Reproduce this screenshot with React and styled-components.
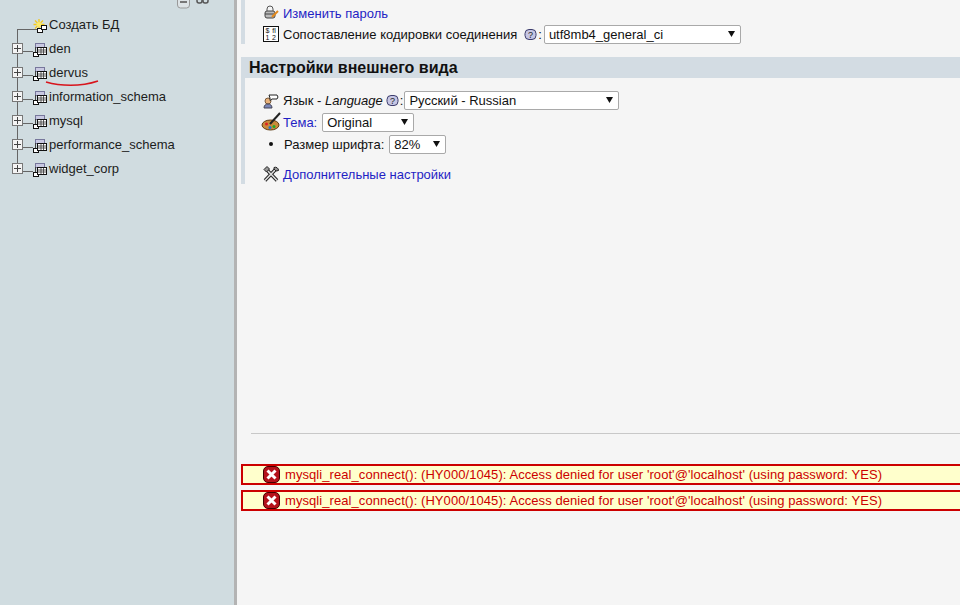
import React from "react";
import styled, { createGlobalStyle } from "styled-components";

const Global = createGlobalStyle`
  html, body { margin: 0; padding: 0; height: 605px; overflow: hidden; background: #f5f5f5; }
  body { font-family: "Liberation Sans", Arial, sans-serif; font-size: 13px; color: #111; }
`;

const Page = styled.div`display: flex; width: 960px; height: 605px; overflow: hidden;`;
const Sidebar = styled.aside`
  flex: 0 0 234px; background: #d0dce0; display: flex; flex-direction: column; position: relative;
`;
const SideTools = styled.div`
  display: flex; gap: 6px; height: 9px; padding-left: 177px; align-items: flex-start; overflow: hidden;
`;
const Tree = styled.ul`list-style: none; margin: 3px 0 0; padding: 0 0 0 12px;`;
const TreeRow = styled.li`
  display: flex; align-items: center; height: 24px; position: relative; font-size: 13px; color: #1c1c1c;
  &::before {
    content: ""; position: absolute; left: 5px; top: ${p => p.$first ? "17px" : "0"}; bottom: ${p => p.$last ? "7px" : "0"}; width: 1px; background: #666;
  }
`;
const Expander = styled.span`
  box-sizing: border-box; display: block; flex: 0 0 11px; height: 11px; border: 1px solid #777; background: #f4f4f4; position: relative; z-index: 1; visibility: ${p => p.$hide ? "hidden" : "visible"};
  &::before { content: ""; position: absolute; left: 1px; right: 1px; top: 4px; height: 1px; background: #444; }
  &::after { content: ""; position: absolute; top: 1px; bottom: 1px; left: 4px; width: 1px; background: #444; }
`;
const Connector = styled.span`
  flex: 0 0 ${p => p.$long ? 20 : 10}px; height: 1px; background: #666; margin: ${p => p.$long ? "10px -4px 0 -6px" : "7px 0 0"};
`;
const TreeIcon = styled.svg`flex: 0 0 14px; width: 14px; height: 14px; margin-right: 2px; margin-top: 3px; position: relative;`;
const Mark = styled.svg`position: absolute; left: 45px; top: 79px; width: 54px; height: 9px;`;
const Divider = styled.div`flex: 0 0 3px; background: #b3b3b3;`;

const Main = styled.main`flex: 1; background: #f5f5f5; padding-left: 4px; min-width: 0;`;
const Group = styled.section`
  border-left: 4px solid #d3dce3; padding: ${p => p.$pad || "0"}; display: flex; flex-direction: column;
`;
const Row = styled.div`
  display: flex; align-items: center; height: ${p => p.$h || 20}px; margin-top: ${p => p.$mt || 0}px; padding-left: 18px; white-space: nowrap;
`;
const Ico = styled.svg`flex: 0 0 16px; width: 16px; height: 16px; margin-right: 4px; overflow: visible;`;
const Link = styled.a`color: #1f1fc4; text-decoration: none;`;
const Help = styled.svg`width: 13px; height: 13px; margin: 0 1px 0 3px; flex: 0 0 13px;`;
const Gap = styled.span`width: 4px; flex: none;`;
const Heading = styled.h2`
  margin: 13px 0 0; height: 21px; line-height: 21px; background: #d3dce3; font-size: 16px; font-weight: bold; padding-left: 8px; color: #111;
`;
const SelectWrap = styled.span`
  position: relative; display: inline-block; width: ${p => p.$w}px; height: ${p => p.$h || 19}px; margin-left: ${p => p.$ml || 0}px; flex: none;
`;
const Select = styled.select`
  appearance: none; width: 100%; height: 100%; box-sizing: border-box; background: #fff; border: 1px solid #a9a9a9; border-radius: 2px; font: 13px "Liberation Sans", Arial, sans-serif; color: #111; padding: 0 0 0 4px; margin: 0; display: block;
`;
const Arrow = styled.svg`position: absolute; right: 6px; top: 6px; width: 7px; height: 6px;`;
const Bullet = styled.span`width: 4px; height: 4px; border-radius: 50%; background: #111; margin: 0 11px 0 6px; flex: none;`;
const Rule = styled.hr`border: 0; height: 1px; background: #c8c8c8; margin: 249px 0 0 10px;`;
const Errors = styled.div`margin-top: 30px; display: flex; flex-direction: column; gap: 5px;`;
const ErrorBox = styled.div`
  display: flex; align-items: center; height: 21px; box-sizing: border-box; border: 2px solid #c00; border-right: 0; background: #ffc; color: #c00; padding-left: 20px; font-size: 13px; white-space: nowrap; letter-spacing: 0.07px;
`;
const ErrIcon = styled.svg`width: 17px; height: 17px; flex: none; margin-right: 5px;`;

const DbIcon = () => (
  <TreeIcon viewBox="0 0 14 14">
    <rect x="2.500" y="0.500" width="9" height="4" fill="#c9c9e2" stroke="#77779c" />
    <path d="M2.500 4v5" fill="none" stroke="#444" />
    <rect x="0.500" y="9.500" width="5" height="4" fill="#fff" stroke="#111" />
    <rect x="4.500" y="4.500" width="9" height="7" fill="#fff" stroke="#111" />
    <path d="M5 7h8M5 9h8M8 5v6M10.500 5v6" stroke="#333" strokeWidth="0.800" />
  </TreeIcon>
);
const NewDb = () => (
  <TreeIcon viewBox="0 0 14 14">
    <g stroke="#f2c81e" strokeWidth="1.300">
      <path d="M6 0v11M0.500 5.500h11M2 1.500l8 8M10 1.500l-8 8" />
    </g>
    <circle cx="6" cy="5.500" r="2.500" fill="#fbe96a" />
    <rect x="4.500" y="9.500" width="5" height="4" fill="#fff" stroke="#111" />
    <rect x="8.500" y="6.500" width="5" height="4" fill="#fff" stroke="#111" />
  </TreeIcon>
);
const HelpIcon = () => (
  <Help viewBox="0 0 13 13">
    <rect x="1" y="1.500" width="11" height="10" rx="4" fill="#c6c6e4" stroke="#3c3c6c" />
    <text x="6.500" y="10" textAnchor="middle" fontSize="9" fontFamily="Liberation Sans" fill="#222">?</text>
  </Help>
);
const Sel = ({ w, h, ml, value }) => (
  <SelectWrap $w={w} $h={h} $ml={ml}>
    <Select defaultValue={value}><option>{value}</option></Select>
    <Arrow viewBox="0 0 7 6"><path d="M0 0h7L3.500 6z" fill="#111" /></Arrow>
  </SelectWrap>
);
const Err = () => (
  <ErrorBox>
    <ErrIcon viewBox="0 0 17 17">
      <rect x="0.500" y="0.500" width="16" height="16" rx="4.500" fill="#b5121b" stroke="#400" />
      <path d="M4.500 4.500l8 8M12.500 4.500l-8 8" stroke="#fff" strokeWidth="3" />
    </ErrIcon>
    mysqli_real_connect(): (HY000/1045): Access denied for user 'root'@'localhost' (using password: YES)
  </ErrorBox>
);

const dbs = ["den", "dervus", "information_schema", "mysql", "performance_schema", "widget_corp"];

export default function App() {
  return (
    <Page>
      <Global />
      <Sidebar>
        <SideTools>
          <svg width="13" height="9" viewBox="0 0 13 9"><rect x="0.500" y="-5" width="12" height="13" rx="3" fill="#dde3e6" stroke="#999" /><rect x="3" y="1" width="7" height="2" fill="#777" /></svg>
          <svg width="13" height="5" viewBox="0 0 13 5"><rect x="1" y="-3" width="5" height="6" rx="2" fill="none" stroke="#555" strokeWidth="1.500" /><rect x="7" y="-3" width="5" height="6" rx="2" fill="none" stroke="#555" strokeWidth="1.500" /></svg>
        </SideTools>
        <Tree>
          <TreeRow $first>
            <Expander $hide />
            <Connector $long />
            <NewDb />
            Создать БД
          </TreeRow>
          {dbs.map((d, i) => (
            <TreeRow key={d} $last={i === dbs.length - 1}>
              <Expander />
              <Connector />
              <DbIcon />
              {d}
            </TreeRow>
          ))}
        </Tree>
        <Mark viewBox="0 0 54 9"><path d="M1 3c14 4 34 5 52-1" fill="none" stroke="#d8141c" strokeWidth="1.500" /></Mark>
      </Sidebar>
      <Divider />
      <Main>
        <Group $pad="3px 0 0">
          <Row>
            <Ico viewBox="0 0 16 16">
              <rect x="2" y="6" width="10" height="7" rx="2" fill="#bbb" stroke="#444" />
              <path d="M4 6V4a3 3 0 0 1 6 0v2" fill="none" stroke="#555" />
              <path d="M2 9h10" stroke="#444" />
              <path d="M9 12l6-6" stroke="#e48a1c" strokeWidth="2" />
            </Ico>
            <Link>Изменить пароль</Link>
          </Row>
          <Row $mt={1}>
            <Ico viewBox="0 0 16 16">
              <rect x="0.500" y="0.500" width="15" height="15" fill="#fff" stroke="#111" />
              <text x="4.500" y="7" fontSize="7" textAnchor="middle" fontFamily="Liberation Sans" fill="#111">$</text>
              <text x="11" y="7" fontSize="7" textAnchor="middle" fontFamily="Liberation Sans" fill="#111">fl</text>
              <text x="4.500" y="14" fontSize="7" textAnchor="middle" fontFamily="Liberation Sans" fill="#111">1</text>
              <text x="11" y="14" fontSize="7" textAnchor="middle" fontFamily="Liberation Sans" fill="#111">2</text>
            </Ico>
            Сопоставление кодировки соединения
            <Gap />
            <HelpIcon />:
            <Sel w={197} ml={2} value="utf8mb4_general_ci" />
          </Row>
        </Group>
        <Heading>Настройки внешнего вида</Heading>
        <Group $pad="13px 0 0">
          <Row $h={19}>
            <Ico viewBox="0 0 16 16">
              <circle cx="5" cy="8" r="3" fill="#e9b27b" stroke="#7a5a3c" />
              <path d="M1 15c0-3 2-4 4-4s4 1 4 4z" fill="#7a86b8" stroke="#445" />
              <path d="M6 2h8l1 2-1 2H9L7 7.500V5z" fill="#fff" stroke="#222" />
            </Ico>
            Язык - <i>&nbsp;Language</i>
            <HelpIcon />:
            <Sel w={215} ml={1} value="Русский - Russian" />
          </Row>
          <Row $mt={2}>
            <Ico viewBox="0 0 16 16">
              <ellipse cx="7.500" cy="11" rx="8.500" ry="5" fill="#c98a3a" stroke="#5b3a12" />
              <circle cx="3.500" cy="10" r="1.500" fill="#d22" /><circle cx="7" cy="13.500" r="1.500" fill="#27c" /><circle cx="11" cy="12.500" r="1.500" fill="#2a2" />
              <path d="M7 10L17 -1" stroke="#222" strokeWidth="2" />
            </Ico>
            <Link>Тема:</Link>
            <Sel w={92} ml={5} value="Original" />
          </Row>
          <Row $mt={2}>
            <Bullet />
            Размер шрифта:
            <Sel w={57} ml={5} value="82%" />
          </Row>
          <Row $mt={10}>
            <Ico viewBox="0 0 16 16">
              <path d="M2 14.500L12 4M14 14.500L4 4" stroke="#222" strokeWidth="3.400" />
              <path d="M2 14.500L12 4M14 14.500L4 4" stroke="#ddd" strokeWidth="1.500" />
              <path d="M1 3.500l3-3 2.500 2.500-3 3zM11 1.500a3.200 3.200 0 0 1 4.500 3l-2.500.5-2-2z" fill="#999" stroke="#222" />
            </Ico>
            <Link>Дополнительные настройки</Link>
          </Row>
        </Group>
        <Rule />
        <Errors>
          <Err />
          <Err />
        </Errors>
      </Main>
    </Page>
  );
}
